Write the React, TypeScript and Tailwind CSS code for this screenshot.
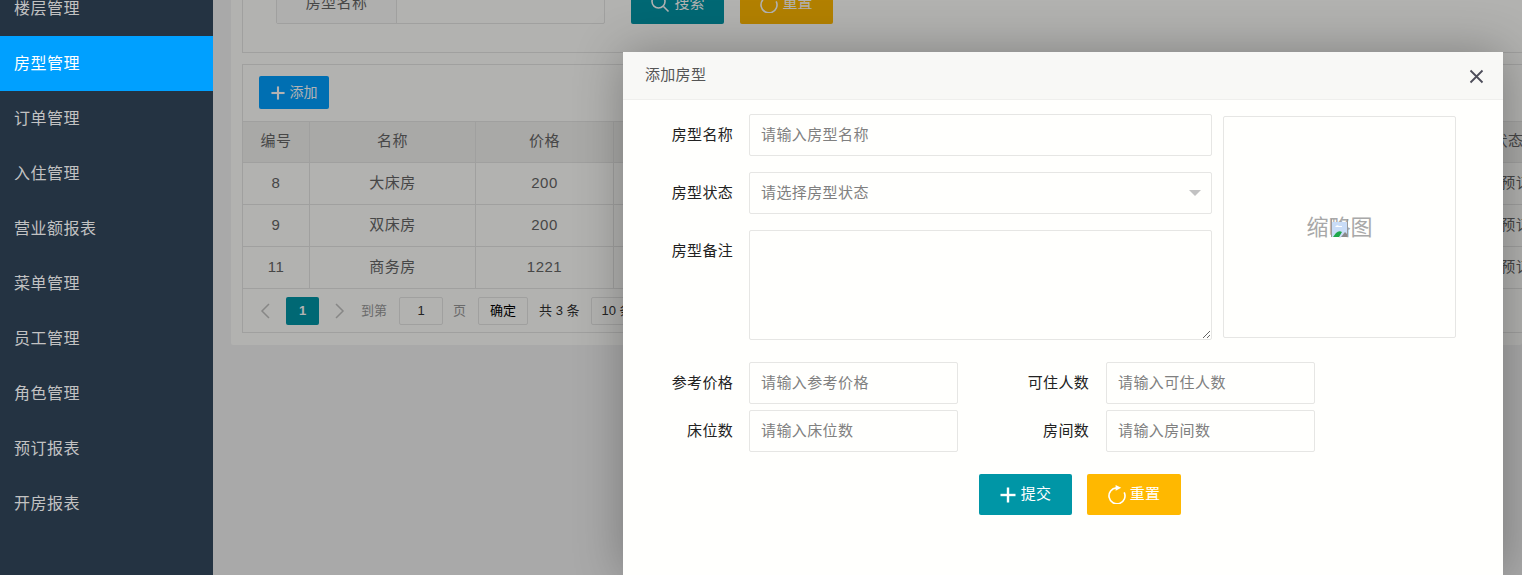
import React from "react";

const menu = ["楼层管理", "房型管理", "订单管理", "入住管理", "营业额报表", "菜单管理", "员工管理", "角色管理", "预订报表", "开房报表"];

const rows = [
  { id: "8", name: "大床房", price: "200" },
  { id: "9", name: "双床房", price: "200" },
  { id: "11", name: "商务房", price: "1221" },
];

const cell = "flex items-center justify-center border-r border-[#e6e6e4]";
const gridCols = "grid grid-cols-[67px_166px_138px_844px_100px]";
const field =
  "h-[42px] rounded-[2px] border border-[#e6e6e4] bg-[#fffffd] px-[11px] pb-[2px] text-[15px] tracking-[0.4px] text-[#333] outline-none placeholder:text-[#808080]";

function PlusIcon({ size = 16 }: { size?: number }) {
  return (
    <svg width={size} height={size} viewBox="0 0 16 16" fill="currentColor" className="shrink-0">
      <rect x="6.8" y="0.5" width="2.4" height="15" />
      <rect x="0.5" y="6.8" width="15" height="2.4" />
    </svg>
  );
}

function RefreshIcon() {
  return (
    <svg width="18" height="19" viewBox="0 0 18 19" fill="none" className="shrink-0">
      <path d="M8.4 2.9A8 8 0 1 0 16.2 7.4" stroke="currentColor" strokeWidth="1.6" />
      <path d="M7.6 0 L13.2 2.8 L7.6 5.8 Z" fill="currentColor" />
    </svg>
  );
}

function Label({ children, className }: { children: React.ReactNode; className: string }) {
  return <label className={`flex h-[42px] shrink-0 items-center justify-end text-[15px] tracking-[0.3px] text-[#222] ${className}`}>{children}</label>;
}

function Background() {
  return (
    <main className="min-w-0 flex-1 bg-[#f2f2f2] pl-[18px]">
      <div className="-mt-[40px] h-[385px] overflow-hidden rounded-[2px] bg-[#fffffd] px-[11px] pt-[10px]">
        <div className="h-[83px] w-[1400px] border border-[#e6e6e4] pt-[11px] pl-[33px]">
          <div className="flex">
            <div className="flex h-[42px] w-[329px] rounded-[2px] border border-[#e6e6e4]">
              <div className="flex w-[120px] items-center justify-center border-r border-[#e6e6e4] bg-[#fbfbf9] text-[15px] tracking-[0.4px] text-[#666]">房型名称</div>
            </div>
            <button className="ml-[26px] flex h-[42px] w-[93px] items-center justify-center gap-1 rounded-[2px] bg-[#0096a6] text-[15px] text-white">
              <svg width="20" height="20" viewBox="0 0 20 20" fill="none" stroke="currentColor" strokeWidth="1.6">
                <circle cx="8.5" cy="8.5" r="6.5" />
                <path d="M13.5 13.5 L18.5 18.5" />
              </svg>
              搜索
            </button>
            <button className="ml-[16px] flex h-[42px] w-[93px] items-center justify-center gap-1 rounded-[2px] bg-[#ffb800] text-[15px] text-white">
              <RefreshIcon />
              重置
            </button>
          </div>
        </div>

        <div className="mt-[11px] h-[269px] w-[1400px] border border-[#e6e6e4]">
          <div className="h-[56px] pt-[11px] pl-[16px]">
            <button className="flex h-[33px] w-[70px] items-center justify-center gap-[5px] rounded-[2px] bg-[#00a0ff] text-[14px] text-white">
              <PlusIcon size={14} />
              添加
            </button>
          </div>
          <div className={`${gridCols} h-[42px] border-y border-[#e6e6e4] bg-[#f2f2f0] text-[15px] tracking-[0.5px] text-[#666]`}>
            <div className={`${cell} pb-[2px]`}>编号</div>
            <div className={`${cell} pb-[2px]`}>名称</div>
            <div className={`${cell} pb-[2px]`}>价格</div>
            <div className={cell} />
            <div className="flex items-center justify-center pb-[2px]">状态</div>
          </div>
          {rows.map((r) => (
            <div key={r.id} className={`${gridCols} h-[42px] border-b border-[#e6e6e4] text-[15px] tracking-[0.5px] text-[#666]`}>
              <div className={cell}>{r.id}</div>
              <div className={cell}>{r.name}</div>
              <div className={cell}>{r.price}</div>
              <div className={cell} />
              <div className="flex items-center justify-center">可预订</div>
            </div>
          ))}
          <div className="flex h-[43px] items-center text-[13px] text-[#333]">
            <svg width="10" height="16" viewBox="0 0 10 16" fill="none" stroke="#c2c2c0" strokeWidth="1.5" className="ml-[17px]">
              <path d="M9 1 L2 8 L9 15" />
            </svg>
            <span className="ml-[16px] flex h-[28px] w-[33px] items-center justify-center rounded-[2px] bg-[#0096a6] font-bold text-white">1</span>
            <svg width="10" height="16" viewBox="0 0 10 16" fill="none" stroke="#c2c2c0" strokeWidth="1.5" className="ml-[16px]">
              <path d="M1 1 L8 8 L1 15" />
            </svg>
            <span className="ml-[16px] text-[#999]">到第</span>
            <span className="ml-[12px] flex h-[28px] w-[44px] items-center justify-center rounded-[2px] border border-[#e6e6e4] text-[#333]">1</span>
            <span className="ml-[10px] text-[#999]">页</span>
            <span className="ml-[12px] flex h-[28px] w-[50px] items-center justify-center rounded-[2px] border border-[#e6e6e4] text-black">确定</span>
            <span className="ml-[11px]">共 3 条</span>
            <span className="ml-[11px] flex h-[28px] w-[100px] items-center rounded-[2px] border border-[#e6e6e4] pl-[10px]">10 条/页</span>
          </div>
        </div>
      </div>
    </main>
  );
}

function Modal() {
  return (
    <div className="absolute top-[52px] right-[19px] bottom-0 left-[623px] z-30 rounded-t-[2px] bg-[#fffffd] shadow-[1px_1px_50px_rgba(0,0,0,0.3)]">
      <div className="flex h-[48px] items-center justify-between border-b border-[#efefed] bg-[#f8f8f6] pr-[19px] pl-[22px] text-[15px] tracking-[0.3px] text-[#555]">
        <span>添加房型</span>
        <svg width="15" height="15" viewBox="0 0 15 15" fill="none" stroke="#4d4d5a" strokeWidth="1.8" className="mt-[1px]">
          <path d="M1.5 1.5 L13.5 13.5 M13.5 1.5 L1.5 13.5" />
        </svg>
      </div>
      <div className="pt-[14px]">
        <div className="flex items-start">
          <div className="flex w-[589px] flex-col gap-[16px]">
            <div className="flex">
              <Label className="w-[110px]">房型名称</Label>
              <input placeholder="请输入房型名称" className={`${field} ml-[16px] w-[463px]`} />
            </div>
            <div className="flex">
              <Label className="w-[110px]">房型状态</Label>
              <div className="relative ml-[16px] w-[463px]">
                <input readOnly placeholder="请选择房型状态" className={`${field} w-full`} />
                <span className="absolute top-[18px] right-[11px] h-0 w-0 border-x-[6px] border-t-[6px] border-x-transparent border-t-[#c2c2c2]" />
              </div>
            </div>
            <div className="flex">
              <Label className="w-[110px]">房型备注</Label>
              <textarea className="ml-[16px] block h-[110px] w-[463px] rounded-[2px] border border-[#e6e6e4] bg-[#fffffd] outline-none" />
            </div>
          </div>
          <div className="relative mt-[2px] ml-[11px] flex h-[222px] w-[233px] items-center justify-center rounded-[2px] border border-[#e6e6e4] text-[22px] text-[#a8a8a8]">
            缩略图
            <svg width="17" height="19" viewBox="0 0 17 19" className="absolute top-[101px] left-[107px]">
              <path d="M0 1 L1 1 L1 19 L0 19 Z M16 1 L17 1 L17 19 L16 19 Z" fill="#9a9a9a" />
              <rect x="1" y="4" width="15" height="15" fill="#c9dcf7" />
              <path d="M4 9 Q6 6 8 8 L11 8 L11 9 Z" fill="#ffffff" />
              <path d="M2 19 L5 15 Q8 12 11 14 L8 19 Z" fill="#1fa84a" />
              <path d="M10 19 L14 14 L16 16 L16 19 Z" fill="#8a8a8a" />
            </svg>
          </div>
        </div>

        <div className="mt-[22px] flex flex-col gap-[6px]">
          <div className="flex">
            <Label className="w-[110px]">参考价格</Label>
            <input placeholder="请输入参考价格" className={`${field} ml-[16px] w-[209px]`} />
            <Label className="w-[131px]">可住人数</Label>
            <input placeholder="请输入可住人数" className={`${field} ml-[17px] w-[209px]`} />
          </div>
          <div className="flex">
            <Label className="w-[110px]">床位数</Label>
            <input placeholder="请输入床位数" className={`${field} ml-[16px] w-[209px]`} />
            <Label className="w-[131px]">房间数</Label>
            <input placeholder="请输入房间数" className={`${field} ml-[17px] w-[209px]`} />
          </div>
        </div>

        <div className="mt-[22px] ml-[356px] flex gap-[15px]">
          <button className="flex h-[41px] w-[93px] items-center justify-center gap-[5px] rounded-[2px] bg-[#0096a6] text-[15px] tracking-[0.3px] text-white">
            <PlusIcon />
            提交
          </button>
          <button className="flex h-[41px] w-[94px] items-center justify-center gap-[4px] rounded-[2px] bg-[#ffb800] text-[15px] tracking-[0.3px] text-white">
            <RefreshIcon />
            重置
          </button>
        </div>
      </div>
    </div>
  );
}

export default function App() {
  return (
    <div className="relative flex h-[575px] w-[1522px] overflow-hidden font-['Liberation_Sans','Noto_Sans_CJK_SC',sans-serif]">
      <aside className="relative z-20 w-[213px] shrink-0 bg-[#243342]">
        <ul className="-mt-[19px]">
          {menu.map((m) => (
            <li
              key={m}
              className={`flex h-[55px] items-center pl-[14px] text-[16px] tracking-[0.5px] ${m === "房型管理" ? "bg-[#00a0ff] text-white" : "text-[#c2c2c2]"}`}
            >
              {m}
            </li>
          ))}
        </ul>
      </aside>
      <Background />
      <div className="absolute inset-0 z-10 bg-black/30" />
      <Modal />
    </div>
  );
}
